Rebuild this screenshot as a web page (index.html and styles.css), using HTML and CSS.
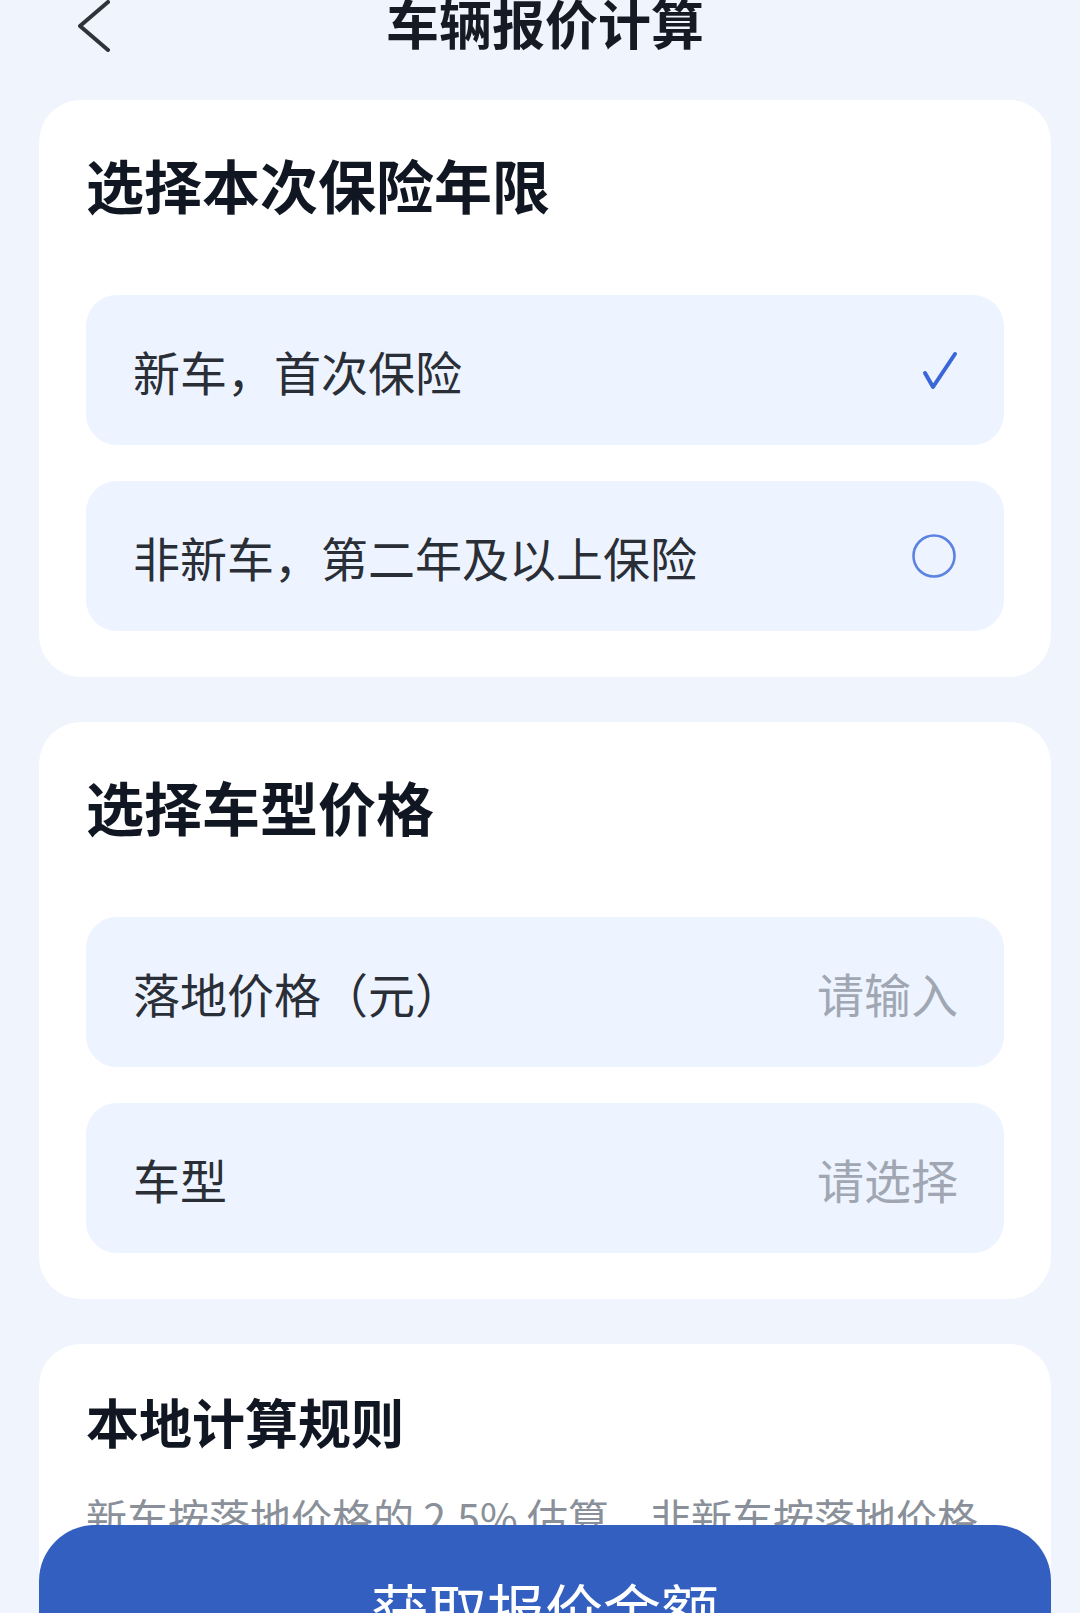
FILE: index.html
```html
<!DOCTYPE html>
<html lang="zh-CN">
<head>
<meta charset="utf-8">
<title>车辆报价计算</title>
<link rel="stylesheet" href="styles.css">
</head>
<body>
<div class="page">
  <header class="header">
    <div class="header-left">
      <svg class="back" width="32" height="52" viewBox="0 0 32 52"><polyline points="30,2 2,26 30,50" fill="none" stroke="#2f333a" stroke-width="4" stroke-linecap="round" stroke-linejoin="round"/></svg>
    </div>
    <h1 class="title">车辆报价计算</h1>
    <div class="header-right"></div>
  </header>

  <main class="cards">
    <section class="card">
      <h2 class="card-title">选择本次保险年限</h2>
      <div class="rows">
        <div class="row">
          <span class="row-label">新车，首次保险</span>
          <svg class="check" width="40" height="40" viewBox="0 0 40 40"><polyline points="5,23 13,37 35,4" fill="none" stroke="#3b66d9" stroke-width="4" stroke-linecap="round" stroke-linejoin="round"/></svg>
        </div>
        <div class="row">
          <span class="row-label">非新车，第二年及以上保险</span>
          <svg class="radio" width="46" height="46" viewBox="0 0 46 46"><circle cx="23" cy="23" r="20.5" fill="none" stroke="#5c82e2" stroke-width="2.6"/></svg>
        </div>
      </div>
    </section>

    <section class="card">
      <h2 class="card-title">选择车型价格</h2>
      <div class="rows">
        <div class="row">
          <span class="row-label">落地价格（元）</span>
          <span class="placeholder">请输入</span>
        </div>
        <div class="row">
          <span class="row-label">车型</span>
          <span class="placeholder">请选择</span>
        </div>
      </div>
    </section>

    <section class="card card-rules">
      <h2 class="card-title rules-title">本地计算规则</h2>
      <p class="desc">新车按落地价格的 2.5% 估算，非新车按落地价格的 1.5% 估算，结果仅供参考，以实际出单金额为准。</p>
    </section>
  </main>

  <footer class="footer">
    <button class="submit" type="button">获取报价金额</button>
  </footer>
</div>
</body>
</html>
```

FILE: styles.css
```css
* { box-sizing: border-box; }

html, body {
  margin: 0;
  padding: 0;
  background: #f0f4fc;
}

body {
  font-family: "Noto Sans CJK SC", "Noto Sans", sans-serif;
  color: #141a26;
}

.page {
  display: flex;
  flex-direction: column;
  padding: 0 29px 200px 39px;
}

.header {
  display: grid;
  grid-template-columns: 1fr auto 1fr;
  align-items: center;
  height: 44px;
}

.header-left {
  display: flex;
  align-items: center;
  padding-left: 39px;
}

.back { display: block; }

.title {
  margin: -8px 0 0;
  font-size: 53px;
  line-height: 44px;
  font-weight: 700;
  color: #151a24;
  white-space: nowrap;
}

.cards {
  display: flex;
  flex-direction: column;
  gap: 45px;
  margin-top: 56px;
}

.card {
  background: #ffffff;
  border-radius: 42px;
  padding: 47px 47px 46px;
}

.card-title {
  margin: 0 0 73px;
  font-size: 58px;
  line-height: 75px;
  font-weight: 700;
  color: #111722;
}

.rows {
  display: flex;
  flex-direction: column;
  gap: 36px;
}

.row {
  display: flex;
  align-items: center;
  justify-content: space-between;
  height: 150px;
  padding: 0 46px 0 47px;
  background: #edf4ff;
  border-radius: 31px;
}

.row-label {
  font-size: 47px;
  line-height: 1;
  color: #2a2e36;
}

.placeholder {
  font-size: 47px;
  line-height: 1;
  color: #a1a7b2;
}

.check {
  display: block;
  margin-right: -2px;
}

.radio {
  display: block;
  margin-right: 1px;
}

.card-rules {
  padding-top: 42px;
}

.rules-title {
  margin-bottom: 27px;
  font-size: 53px;
  line-height: 70px;
}

.desc {
  margin: 0;
  font-size: 41px;
  line-height: 66px;
  color: #8a9099;
}

.footer {
  position: fixed;
  left: 0;
  right: 0;
  bottom: 0;
  height: 88px;
  padding: 0 29px 0 39px;
  overflow: hidden;
}

.submit {
  display: flex;
  align-items: center;
  justify-content: center;
  width: 100%;
  height: 166px;
  border: 0;
  border-radius: 56px;
  background: #3360c0;
  color: #ffffff;
  font-family: "Noto Sans CJK SC", "Noto Sans", sans-serif;
  font-size: 58px;
  font-weight: 400;
  padding: 0;
}
```
